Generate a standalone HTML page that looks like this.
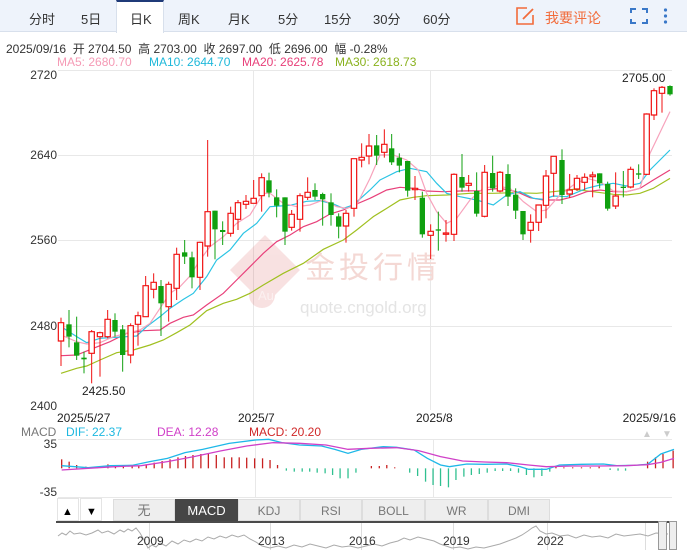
<!DOCTYPE html>
<html><head><meta charset="utf-8"><style>
*{margin:0;padding:0;box-sizing:border-box}
body{width:687px;height:550px;overflow:hidden;background:#fff;font-family:"Liberation Sans","Noto Sans CJK SC",sans-serif;position:relative;color:#333}
.a{position:absolute;white-space:nowrap}
#bar{position:absolute;left:0;top:0;width:687px;height:32px;background:#eef3fb;border-bottom:1px solid #d8e0ec}
.t{position:absolute;top:9px;font-size:13px;color:#333}
#act{position:absolute;left:116px;top:0;width:48px;height:33px;background:#fff;border-top:2px solid #1f3a78;border-left:1px solid #d8e0ec;border-right:1px solid #d8e0ec}
.btn{position:absolute;top:499px;height:22px;font-size:12px;text-align:center;line-height:22px;background:#eee;color:#777;border:1px solid #ddd}
</style></head><body>
<div id="bar"></div><div id="act"></div>
<div class="t" style="left:29px">分时</div>
<div class="t" style="left:81px">5日</div>
<div class="t" style="left:130px">日K</div>
<div class="t" style="left:178px">周K</div>
<div class="t" style="left:228px">月K</div>
<div class="t" style="left:278px">5分</div>
<div class="t" style="left:324px">15分</div>
<div class="t" style="left:373px">30分</div>
<div class="t" style="left:423px">60分</div>
<svg class="a" style="left:516px;top:7px" width="20" height="18" viewBox="0 0 20 18"><path d="M11 1H1V17H17V8" fill="none" stroke="#f26b3a" stroke-width="1.6"/><path d="M7 12L17 2" stroke="#f26b3a" stroke-width="1.8"/></svg>
<div class="a" style="left:545px;top:8px;font-size:14px;color:#f26b3a">我要评论</div>
<svg class="a" style="left:630px;top:8px" width="18" height="16"><path d="M1 5V1H6M12 1H17V5M17 11V15H12M6 15H1V11" fill="none" stroke="#3a78c8" stroke-width="2"/></svg>
<svg class="a" style="left:663px;top:8px" width="5" height="16"><circle cx="2.5" cy="2" r="1.6" fill="#3a78c8"/><circle cx="2.5" cy="8" r="1.6" fill="#3a78c8"/><circle cx="2.5" cy="14" r="1.6" fill="#3a78c8"/></svg>

<div class="a" style="left:6px;top:40px;font-size:12px;color:#333">2025/09/16&nbsp; 开 2704.50&nbsp; 高 2703.00&nbsp; 收 2697.00&nbsp; 低 2696.00&nbsp; 幅 -0.28%</div>
<div class="a" style="left:57px;top:55px;font-size:12px;color:#f59ab5">MA5: 2680.70</div>
<div class="a" style="left:149px;top:55px;font-size:12px;color:#1eb8da">MA10: 2644.70</div>
<div class="a" style="left:242px;top:55px;font-size:12px;color:#e8407a">MA20: 2625.78</div>
<div class="a" style="left:335px;top:55px;font-size:12px;color:#8ab21e">MA30: 2618.73</div>

<svg class="a" style="left:0;top:0" width="687" height="550">
<g stroke="#e8e8e8" stroke-width="1">
<line x1="58" y1="70.5" x2="672" y2="70.5"/><line x1="58" y1="155.5" x2="672" y2="155.5"/><line x1="58" y1="240.5" x2="672" y2="240.5"/><line x1="58" y1="326.5" x2="672" y2="326.5"/>
<line x1="253.5" y1="70" x2="253.5" y2="410"/><line x1="430.5" y1="70" x2="430.5" y2="410"/>
<line x1="58" y1="439.5" x2="672" y2="439.5"/><line x1="58" y1="497.5" x2="672" y2="497.5"/>
<line x1="255.5" y1="439" x2="255.5" y2="498"/><line x1="433.5" y1="439" x2="433.5" y2="498"/>
</g>
<g font-size="12" fill="#333" text-anchor="end"><text x="57" y="79">2720</text><text x="57" y="159">2640</text><text x="57" y="244">2560</text><text x="57" y="330">2480</text><text x="57" y="410">2400</text></g>
<!-- watermark -->
<g opacity="0.13"><path d="M265 235L300 270L265 305L230 270Z" fill="#d02020"/><circle cx="262" cy="295" r="13" fill="#d02020"/></g>
<text x="258" y="300" font-size="13" fill="#fff" opacity="0.5">Au</text>
<text x="305" y="278" font-size="30" fill="#f4d8d4" font-family="Noto Sans CJK SC,sans-serif" letter-spacing="4">金投行情</text>
<text x="300" y="313" font-size="17" fill="#e4e4e4">quote.cngold.org</text>

<g transform="translate(50,60) scale(0.33333)" fill="none" stroke-width="1.2">
<polyline vector-effect="non-scaling-stroke" stroke="#a0c020" points="33,940 80,925 110,918 150,900 200,878 250,870 300,855 340,840 380,818 420,795 470,752 520,730 560,718 600,700 640,675 700,640 760,610 820,568 880,540 920,510 960,478 970,470 1010,445 1050,420 1090,412 1130,407 1190,405 1260,400 1330,400 1390,398 1460,400 1510,395 1570,388 1630,395 1690,403 1730,405 1770,400 1810,385 1860,355"/>
<polyline vector-effect="non-scaling-stroke" stroke="#e8407a" points="33,887 80,885 130,865 180,845 230,820 280,812 330,810 360,790 400,772 430,765 470,735 520,700 560,660 600,620 640,580 680,545 720,525 760,500 800,485 840,462 880,450 920,432 960,415 970,410 1010,390 1050,382 1090,385 1130,393 1180,395 1230,393 1290,392 1350,385 1400,395 1440,413 1480,420 1530,420 1570,410 1610,395 1650,390 1690,395 1730,395 1770,385 1810,360 1860,330"/>
<polyline vector-effect="non-scaling-stroke" stroke="#2bc4e4" points="33,800 80,830 110,848 150,835 200,832 260,828 290,800 330,770 360,745 400,718 430,700 470,650 500,600 540,570 580,520 620,490 660,440 690,438 720,436 770,424 810,422 850,432 880,445 910,435 960,390 990,360 1040,335 1080,325 1130,335 1160,370 1190,400 1230,410 1280,420 1330,435 1370,405 1410,395 1450,415 1480,418 1510,408 1550,410 1610,385 1650,375 1690,370 1730,378 1770,370 1800,330 1860,270"/>
<polyline vector-effect="non-scaling-stroke" stroke="#f7a3bc" points="33,825 80,845 110,852 150,848 190,830 230,820 270,810 300,790 330,745 360,700 390,680 420,648 450,600 480,560 520,530 560,490 600,465 640,400 660,400 700,430 740,440 780,435 820,420 860,440 890,445 920,435 960,355 990,285 1030,285 1070,300 1105,330 1130,400 1160,455 1190,490 1220,475 1260,420 1300,385 1340,378 1380,385 1420,425 1460,455 1490,450 1530,405 1570,375 1610,355 1650,365 1690,393 1730,395 1770,385 1800,280 1860,155"/>
</g>
<g id="c" transform="translate(50,60) scale(0.33333)"></g>
<text x="82" y="395" font-size="12" fill="#222">2425.50</text>
<text x="622" y="82" font-size="12" fill="#222">2705.00</text>

<g font-size="12" fill="#222"><text x="57" y="422">2025/5/27</text><text x="238" y="422">2025/7</text><text x="416" y="422">2025/8</text><text x="676" y="422" text-anchor="end">2025/9/16</text></g>
<g font-size="12"><text x="21" y="436" fill="#777">MACD</text><text x="66" y="436" fill="#1eb8e0">DIF: 22.37</text><text x="157" y="436" fill="#d040c8">DEA: 12.28</text><text x="249" y="436" fill="#d02828">MACD: 20.20</text></g>
<text x="642" y="437" font-size="10" fill="#ccc">▲</text><text x="662" y="437" font-size="10" fill="#ccc">▼</text>
<g font-size="12" fill="#333" text-anchor="end"><text x="57" y="448">35</text><text x="57" y="496">-35</text></g>
<g transform="translate(0,400) scale(0.44053,0.33333)" fill="none">
<g id="h" stroke-width="1.3"></g>
<polyline vector-effect="non-scaling-stroke" stroke-width="1.3" stroke="#1eb8e8" points="140,197 200,203 250,197 300,196 340,185 380,175 420,158 460,148 520,130 580,120 610,118 640,128 680,135 730,138 760,148 790,160 820,148 870,140 900,142 940,150 970,175 1000,195 1020,200 1060,192 1100,193 1150,192 1180,200 1200,208 1240,208 1270,195 1320,193 1370,192 1400,197 1440,196 1470,193 1500,162 1530,148"/>
<polyline vector-effect="non-scaling-stroke" stroke-width="1.3" stroke="#d040c8" points="140,210 200,205 260,200 320,197 380,185 440,170 500,153 560,138 620,128 680,130 740,135 790,148 840,145 900,143 950,152 1000,170 1050,183 1100,186 1150,188 1200,195 1240,200 1300,198 1360,198 1420,197 1470,194 1500,187 1530,175"/>
</g>
<rect x="57.5" y="498.5" width="21" height="22" fill="#fff" stroke="#e4e4e4"/><rect x="80.5" y="498.5" width="21" height="22" fill="#fff" stroke="#e4e4e4"/>
<text x="62" y="515" font-size="11" fill="#000">▲</text><text x="86" y="515" font-size="11" fill="#000">▼</text>
<rect x="56" y="521" width="620" height="2" fill="#4a4a4a"/>
<line x1="149.5" y1="523" x2="149.5" y2="550" stroke="#ddd"/><line x1="270.5" y1="523" x2="270.5" y2="550" stroke="#ddd"/><line x1="361.5" y1="523" x2="361.5" y2="550" stroke="#ddd"/><line x1="453.5" y1="523" x2="453.5" y2="550" stroke="#ddd"/><line x1="547.5" y1="523" x2="547.5" y2="550" stroke="#ddd"/><line x1="645.5" y1="523" x2="645.5" y2="550" stroke="#ddd"/>
<polyline fill="none" stroke="#aaa" stroke-width="1" points="58,536 62,533 66,535 70,531 74,534 80,533 86,535 92,533 98,530 102,533 108,531 114,534 120,530 124,532 128,529 132,531 136,528 140,533 144,540 148,548 152,545 156,547 160,543 166,546 172,541 178,544 184,540 190,542 196,539 202,541 208,537 214,539 220,536 226,538 232,535 238,537 244,535 250,539 256,542 262,546 270,548 278,546 286,548 294,545 302,547 310,544 318,546 326,548 334,545 342,547 350,546 358,548 366,546 374,544 382,546 390,543 398,541 404,538 410,540 418,537 426,539 434,541 440,544 446,546 452,548 460,547 468,549 476,547 484,548 492,546 500,544 508,541 516,538 522,535 528,531 532,528 536,526 540,531 546,534 552,533 560,536 568,535 576,538 584,535 592,537 600,536 608,538 616,534 624,536 632,535 640,534 648,536 656,533 668,534"/>
<g font-size="12" fill="#333"><text x="137" y="545">2009</text><text x="258" y="545">2013</text><text x="349" y="545">2016</text><text x="443" y="545">2019</text><text x="537" y="545">2022</text></g>
<rect x="658.5" y="521.5" width="8" height="28" fill="#eee" stroke="#999"/><rect x="669.5" y="521.5" width="7" height="28" fill="#eee" stroke="#999"/>
</svg>
<div class="btn" style="left:113px;width:62px;font-size:13px">无</div>
<div class="btn" style="left:175px;width:63px;background:#464646;color:#fff;border-color:#464646;font-size:13px">MACD</div>
<div class="btn" style="left:238px;width:62px">KDJ</div>
<div class="btn" style="left:300px;width:62px">RSI</div>
<div class="btn" style="left:362px;width:63px">BOLL</div>
<div class="btn" style="left:425px;width:63px">WR</div>
<div class="btn" style="left:488px;width:62px">DMI</div>
<svg width="0" height="0" style="position:absolute">
</svg>
<script>
var NS="http://www.w3.org/2000/svg";
var C=[[33,'r',788,843,773,918],[57,'g',793,830,750,862],[80,'g',847,887,770,900],[102,'g',893,898,875,940],[125,'r',815,880,810,970],[150,'r',818,830,815,950],[173,'r',778,830,750,835],[195,'g',780,815,760,830],[218,'g',808,885,795,935],[242,'r',797,885,790,910],[264,'r',767,793,755,857],[287,'r',677,770,648,770],[311,'r',667,688,640,715],[333,'g',678,730,660,828],[356,'r',673,740,665,785],[380,'r',583,685,563,720],[404,'g',577,590,540,612],[426,'g',592,652,575,685],[450,'r',547,652,545,690],[473,'r',455,558,240,590],[495,'g',452,508,452,598],[518,'g',510,516,484,555],[542,'r',460,520,440,530],[564,'r',428,478,420,510],[588,'r',424,433,405,447],[611,'r',415,430,360,430],[635,'r',353,407,340,455],[657,'g',361,398,338,412],[680,'g',412,437,388,472],[705,'g',412,515,412,555],[725,'r',463,502,450,512],[750,'r',407,478,400,515],[773,'r',397,412,352,420],[795,'g',390,410,370,420],[818,'g',402,418,398,497],[843,'g',427,465,400,497],[866,'g',469,500,460,535],[888,'r',460,498,450,548],[912,'r',296,445,296,470],[935,'r',292,300,250,322]];
var D=[[27,'r',258,288,222,313],[50,'g',256,287,225,315],[73,'r',253,277,208,293],[95,'g',265,307,222,315],[118,'g',293,317,280,337],[143,'g',303,392,303,410],[165,'r',385,388,348,420],[187,'g',413,523,395,533],[212,'r',514,526,493,597],[235,'g',508,511,455,572],[258,'r',519,521,480,545],[282,'r',343,523,340,543],[306,'g',351,383,282,395],[326,'r',370,376,345,395],[350,'g',393,461,337,470],[374,'r',337,469,315,472],[398,'g',339,385,287,395],[420,'r',337,393,333,397],[444,'g',342,410,313,438],[467,'g',404,452,385,477],[489,'g',453,523,453,540],[512,'r',487,511,463,548],[536,'r',435,487,435,513],[558,'r',348,436,330,475],[581,'r',289,340,288,410],[606,'g',300,405,268,432],[629,'r',390,402,342,414],[651,'r',355,387,345,393],[674,'r',352,367,340,390],[698,'r',345,350,335,412],[719,'g',340,370,340,385],[743,'g',372,446,365,452],[767,'r',408,438,337,447],[790,'g',380,383,333,412],[812,'r',328,381,320,385],[836,'g',340,344,313,357],[860,'r',162,343,160,345],[882,'r',92,165,85,180],[906,'r',82,100,78,158],[930,'g',78,103,76,107]];
D.forEach(function(d){C.push([d[0]+930,d[1],d[2],d[3],d[4],d[5]]);});
var g=document.getElementById('c');
C.forEach(function(c){var col=c[1]=='r'?'#f01010':'#10a010';
var l=document.createElementNS(NS,'line');l.setAttribute('x1',c[0]);l.setAttribute('x2',c[0]);l.setAttribute('y1',c[4]);l.setAttribute('y2',c[5]);l.setAttribute('stroke',col);l.setAttribute('stroke-width','1');l.setAttribute('vector-effect','non-scaling-stroke');g.appendChild(l);
var r=document.createElementNS(NS,'rect');var h=Math.max(c[3]-c[2],4);r.setAttribute('x',c[0]-8);r.setAttribute('y',c[2]);r.setAttribute('width',16);r.setAttribute('height',h);
if(c[1]=='r'){r.setAttribute('fill','#fff');r.setAttribute('stroke',col);r.setAttribute('stroke-width','1.2');r.setAttribute('vector-effect','non-scaling-stroke');}else{r.setAttribute('fill',col);}
g.appendChild(r);});
var H=[[140,178],[157,185],[174,195],[195,200],[220,200],[245,193],[262,195],[280,200],[300,198],[315,197],[332,193],[350,188],[368,183],[386,178],[404,172],[421,168],[438,165],[456,162],[473,160],[491,165],[509,172],[526,172],[543,172],[560,173],[578,175],[596,175],[613,180],[630,195],[650,212],[668,215],[686,215],[703,215],[720,218],[738,220],[755,225],[772,235],[790,235],[808,218],[843,198],[861,198],[878,195],[896,202],[930,218],[948,228],[966,245],[983,255],[1000,258],[1018,262],[1035,240],[1053,230],[1070,225],[1088,222],[1106,218],[1124,213],[1141,213],[1159,213],[1177,218],[1195,225],[1212,232],[1230,228],[1248,215],[1262,200],[1280,202],[1300,202],[1320,202],[1340,202],[1360,200],[1385,210],[1403,212],[1420,212],[1470,185],[1488,172],[1505,162],[1528,152]];
var hg=document.getElementById('h');
H.forEach(function(b){var l=document.createElementNS(NS,'line');l.setAttribute('x1',b[0]);l.setAttribute('x2',b[0]);l.setAttribute('y1',205);l.setAttribute('y2',b[1]);l.setAttribute('stroke',b[1]<205?'#c82020':'#30c090');l.setAttribute('vector-effect','non-scaling-stroke');hg.appendChild(l);});
</script>
</body></html>
